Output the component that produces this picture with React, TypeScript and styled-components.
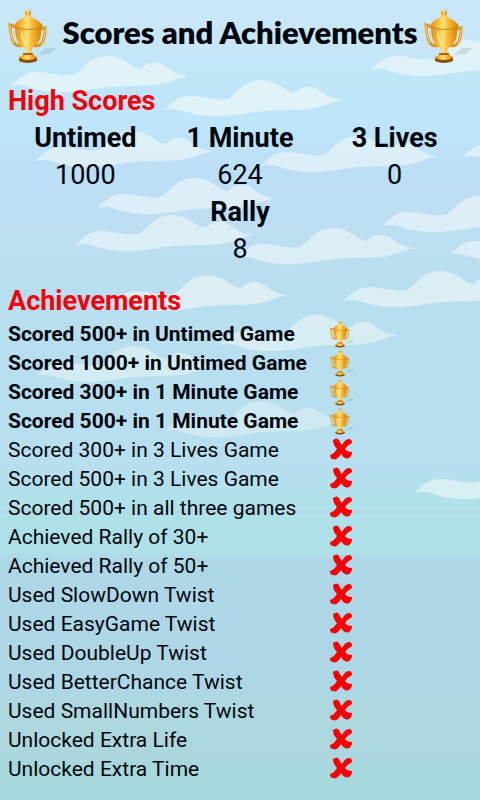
import React from "react";
import styled, { createGlobalStyle } from "styled-components";

const GlobalStyle = createGlobalStyle`
  html, body { margin: 0; padding: 0; }
  body { background: #a8d8dd; }
  *, *::before, *::after { box-sizing: border-box; }
`;

const Page = styled.main`
  position: relative;
  isolation: isolate;
  min-height: 100vh;
  overflow: hidden;
  color: #00060c;
  font-family: Roboto, "Liberation Sans", sans-serif;
`;

const Backdrop = styled.svg`
  position: absolute;
  inset: 0;
  z-index: -1;
  width: 100%;
  height: 100%;
`;

const Header = styled.header`
  display: flex;
  justify-content: space-between;
  align-items: center;
  height: 72px;
  padding: 0 4px;
`;

const Title = styled.h1`
  margin: 0;
  padding-bottom: 8px;
  font: 800 31px/40px Lato, "Open Sans", sans-serif;
  white-space: nowrap;
`;

const TrophyIcon = styled.svg<{ $size: number }>`
  display: block;
  flex: none;
  width: ${(p) => p.$size}px;
  height: ${(p) => p.$size}px;
`;

const CrossIcon = styled.svg`
  display: block;
  width: 26px;
  height: 29px;
`;

const Section = styled.section<{ $space: number }>`
  padding: ${(p) => p.$space}px 8px 0;
`;

const Heading = styled.h2`
  margin: 0;
  color: #f4000a;
  font-size: 27px;
  line-height: 37px;
  font-weight: 700;
`;

const Scores = styled.dl`
  display: flex;
  flex-wrap: wrap;
  justify-content: center;
  margin: 0;
`;

const Score = styled.div`
  flex: 0 0 33.33%;
  text-align: center;
  font-size: 27px;
  line-height: 37px;
`;

const ScoreName = styled.dt`
  font-weight: 700;
`;

const ScoreValue = styled.dd`
  margin: 0;
`;

const List = styled.ul`
  margin: 0;
  padding: 0;
  list-style: none;
`;

const Item = styled.li<{ $done: boolean }>`
  display: grid;
  grid-template-columns: minmax(0, 320px) auto;
  justify-content: start;
  height: 29px;
  font-size: 21px;
  line-height: 29px;
  font-weight: ${(p) => (p.$done ? 700 : 400)};
  white-space: nowrap;
`;

const CLOUD =
  "M0 30C7 25 13 16 25 16C40 16 50 21 63 19C74 15 77 0 98 0C115 1 121 12 131 13C137 5 149 5 156 11C163 16 168 19 178 20C167 22 160 27 146 29C126 31 104 29 84 33C60 37 44 37 30 34C20 32 14 27 0 30Z";

const clouds: [number, number, number][] = [
  [10, 56, 0.55],
  [164, 80, 0.55],
  [370, 40, 0.5],
  [35, 131, 0.5],
  [260, 136, 0.5],
  [462, 127, 0.5],
  [97, 178, 0.5],
  [75, 215, 0.5],
  [236, 228, 0.5],
  [382, 196, 0.5],
  [449, 225, 0.5],
  [343, 271, 0.5],
  [110, 275, 0.5],
  [219, 315, 0.45],
  [36, 346, 0.4],
  [164, 401, 0.35],
  [414, 463, 0.5],
];

function Sky() {
  return (
    <Backdrop viewBox="0 0 480 800" preserveAspectRatio="xMidYMin slice" aria-hidden="true">
      <defs>
        <linearGradient id="sky" x1="0" y1="0" x2="0" y2="1">
          <stop offset="0" stopColor="#c9e7f7" />
          <stop offset="0.06" stopColor="#c7e7f7" />
          <stop offset="0.09" stopColor="#bfe7f8" />
          <stop offset="0.16" stopColor="#bee5f9" />
          <stop offset="0.21" stopColor="#bddff6" />
          <stop offset="0.28" stopColor="#bedff3" />
          <stop offset="0.36" stopColor="#b8dfef" />
          <stop offset="0.58" stopColor="#b7dfef" />
          <stop offset="0.64" stopColor="#afe2e8" />
          <stop offset="0.69" stopColor="#aee0e7" />
          <stop offset="0.7" stopColor="#aed7e7" />
          <stop offset="0.86" stopColor="#aed7e6" />
          <stop offset="0.88" stopColor="#add8df" />
          <stop offset="0.94" stopColor="#abd7dd" />
          <stop offset="0.96" stopColor="#a7d8dd" />
          <stop offset="1" stopColor="#a7d8dd" />
        </linearGradient>
      </defs>
      <rect width="480" height="800" fill="url(#sky)" />
      <path d="M0 510H480V514H0Z" fill="#b4d6e8" opacity="0.6" />
      {clouds.map(([x, y, opacity]) => (
        <path key={`${x}-${y}`} d={CLOUD} transform={`translate(${x} ${y})`} fill="#fcfdf9" opacity={opacity} />
      ))}
    </Backdrop>
  );
}

function Trophy({ size, id }: { size: number; id: string }) {
  return (
    <TrophyIcon $size={size} viewBox="0 0 56 56" aria-hidden="true">
      <defs>
        <linearGradient id={id}>
          <stop offset="0" stopColor="#e58f0c" />
          <stop offset="0.3" stopColor="#fbc23c" />
          <stop offset="0.45" stopColor="#ffe27c" />
          <stop offset="0.7" stopColor="#f6ae25" />
          <stop offset="1" stopColor="#d98508" />
        </linearGradient>
      </defs>
      <path d="M27 53L42 40L53 40L46 46L34 47Z" fill="#8ba9bb" opacity="0.3" />
      <path d="M12 19L6 17Q7 30 10 35Q13 39 19 37" fill="none" stroke="#d99424" strokeWidth="3" />
      <path d="M36 21L41 20Q41 32 37 36Q34 39 29 37" fill="none" stroke="#d99424" strokeWidth="3" />
      <path d="M6 17Q7 30 10 35M41 20Q41 32 37 36" fill="none" stroke="#ffdc8a" />
      <path d="M20 38H28L27 44Q29 47 33 49V52Q24 56 15 52V49Q20 47 22 44Z" fill={`url(#${id})`} />
      <path d="M15 50Q24 54 33 50V53Q24 57 15 53Z" fill="#8b4c0b" />
      <path d="M19 46H29" stroke="#a8640f" strokeWidth="2" />
      <path d="M11 20H37Q38 32 32 37Q24 45 17 38Q11 32 11 20Z" fill={`url(#${id})`} />
      <path d="M10 18Q13 12 19 10L22 7H26L29 10Q36 13 39 18Q35 22 24 22Q14 22 10 18Z" fill={`url(#${id})`} />
      <circle cx="24" cy="5" r="3" fill={`url(#${id})`} />
      <path d="M11 19Q24 24 38 19" fill="none" stroke="#c58324" />
      <path d="M18 24Q18 32 22 37" fill="none" stroke="#fff4b8" strokeWidth="2" opacity="0.7" />
    </TrophyIcon>
  );
}

function Cross() {
  return (
    <CrossIcon viewBox="0 0 26 29" role="img" aria-label="Not achieved">
      <path
        d="M5 4Q9 1 11 4Q12 7 14 9Q17 3 21 3Q24 3 24 7Q20 9 17 13Q19 16 24 16Q24 20 21 22Q17 24 13 18Q9 25 5 23Q2 23 2 19Q6 18 9 13Q5 9 5 4Z"
        fill="#fa0004"
      />
    </CrossIcon>
  );
}

const scores = [
  ["Untimed", "1000"],
  ["1 Minute", "624"],
  ["3 Lives", "0"],
  ["Rally", "8"],
];

const achievements: [string, boolean][] = [
  ["Scored 500+ in Untimed Game", true],
  ["Scored 1000+ in Untimed Game", true],
  ["Scored 300+ in 1 Minute Game", true],
  ["Scored 500+ in 1 Minute Game", true],
  ["Scored 300+ in 3 Lives Game", false],
  ["Scored 500+ in 3 Lives Game", false],
  ["Scored 500+ in all three games", false],
  ["Achieved Rally of 30+", false],
  ["Achieved Rally of 50+", false],
  ["Used SlowDown Twist", false],
  ["Used EasyGame Twist", false],
  ["Used DoubleUp Twist", false],
  ["Used BetterChance Twist", false],
  ["Used SmallNumbers Twist", false],
  ["Unlocked Extra Life", false],
  ["Unlocked Extra Time", false],
];

export default function App() {
  return (
    <Page>
      <GlobalStyle />
      <Sky />
      <Header>
        <Trophy size={56} id="gold-left" />
        <Title>Scores and Achievements</Title>
        <Trophy size={56} id="gold-right" />
      </Header>
      <Section $space={11}>
        <Heading>High Scores</Heading>
        <Scores>
          {scores.map(([name, value]) => (
            <Score key={name}>
              <ScoreName>{name}</ScoreName>
              <ScoreValue>{value}</ScoreValue>
            </Score>
          ))}
        </Scores>
      </Section>
      <Section $space={15}>
        <Heading>Achievements</Heading>
        <List>
          {achievements.map(([name, done], i) => (
            <Item key={name} $done={done}>
              <span>{name}</span>
              {done ? <Trophy size={28} id={`gold-${i}`} /> : <Cross />}
            </Item>
          ))}
        </List>
      </Section>
    </Page>
  );
}
